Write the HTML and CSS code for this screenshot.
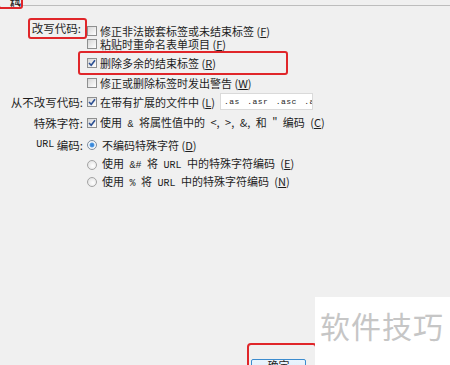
FILE: index.html
```html
<!DOCTYPE html>
<html lang="zh">
<head>
    <meta charset="UTF-8">
    <title>代码改写</title>
    <link rel="stylesheet" href="styles.css">
</head>
<body>
<div class="page">
    <div class="tabbar">
        <div class="tab">代码</div>
        <div class="tabline"></div>
    </div>

    <div class="form">
        <div class="lbl"><span class="mark">改写代码:</span></div>
        <div class="opt"><span class="cb"></span><span>修正非法嵌套标签或未结束标签 (<u>F</u>)</span></div>

        <div class="opt"><span class="cb"></span><span>粘贴时重命名表单项目 (<u>F</u>)</span></div>

        <div class="opt hl"><span class="cb">
            <svg width="8" height="8" viewBox="0 0 8 8"><path d="M1 4 L3.2 6.3 L7 1.3" fill="none" stroke="#2b4f93" stroke-width="1.6"/></svg>
        </span><span>删除多余的结束标签 (<u>R</u>)</span></div>

        <div class="opt"><span class="cb"></span><span>修正或删除标签时发出警告 (<u>W</u>)</span></div>

        <div class="lbl">从不改写代码:</div>
        <div class="opt"><span class="cb">
            <svg width="8" height="8" viewBox="0 0 8 8"><path d="M1 4 L3.2 6.3 L7 1.3" fill="none" stroke="#2b4f93" stroke-width="1.6"/></svg>
        </span><span class="ext-text">在带有扩展的文件中 (<u>L</u>)</span><span class="ext">.as .asr .asc .a</span></div>

        <div class="lbl">特殊字符:</div>
        <div class="opt"><span class="cb">
            <svg width="8" height="8" viewBox="0 0 8 8"><path d="M1 4 L3.2 6.3 L7 1.3" fill="none" stroke="#2b4f93" stroke-width="1.6"/></svg>
        </span><span class="wide">使用 <span class="mono">&amp;</span> 将属性值中的 &lt;, &gt;, &amp;, 和 " 编码 (<u>C</u>)</span></div>

        <div class="lbl"><span class="mono">URL</span>&nbsp;编码:</div>
        <div class="opt"><span class="rd on"></span><span>不编码特殊字符 (<u>D</u>)</span></div>

        <div class="opt"><span class="rd"></span><span class="wide">使用 <span class="mono">&amp;#</span> 将 <span class="mono">URL</span> 中的特殊字符编码 (<u>E</u>)</span></div>

        <div class="opt"><span class="rd"></span><span class="wide">使用 <span class="mono">%</span> 将 <span class="mono">URL</span> 中的特殊字符编码 (<u>N</u>)</span></div>
    </div>

    <div class="footer">
        <div class="okmark">
            <button class="btn">确定</button>
        </div>
    </div>

    <div class="watermark">软件技巧</div>
</div>
</body>
</html>
```

FILE: styles.css
```css
body {
    margin: 0;
    background-color: #f0f0f0;
    font-family: "Noto Sans CJK SC", "Liberation Sans", sans-serif;
    font-size: 11px;
    color: #1e1e1e;
}

.page {
    position: relative;
    width: 450px;
    height: 365px;
    overflow: hidden;
    display: flex;
    flex-direction: column;
}

.tabbar {
    display: flex;
    height: 6px;
}

.tab {
    width: 19px;
    height: 9px;
    margin-top: -4px;
    margin-left: -2px;
    padding-left: 2px;
    border: 2px solid #e0262a;
    border-radius: 3px;
    font-size: 11px;
    line-height: 4px;
    overflow: hidden;
    text-align: right;
    background-color: #f0f0f0;
}

.tabline {
    flex: 1;
    border-bottom: 1px solid #bdbdbd;
}

.form {
    display: grid;
    grid-template-columns: 83px 1fr;
    grid-template-rows: 13px 14px 24px 16px 21px 22px 22px 17px 18px;
    column-gap: 4px;
    margin-top: 18px;
    line-height: 12px;
}

.lbl {
    grid-column: 1;
    display: flex;
    align-items: center;
    justify-content: flex-end;
    white-space: nowrap;
    font-size: 11.5px;
}

.mark {
    display: flex;
    align-items: center;
    height: 17px;
    margin-top: -5px;
    margin-right: -4px;
    padding: 0 4px 0 2px;
    border: 2px solid #e0262a;
    border-radius: 3px;
}

.opt {
    grid-column: 2;
    display: flex;
    align-items: center;
    gap: 3px;
    white-space: nowrap;
}

.opt.hl {
    width: 199px;
    margin-left: -9px;
    padding-left: 7px;
    border: 2px solid #e0262a;
    border-radius: 3px;
}

.cb {
    width: 8px;
    height: 8px;
    border: 1px solid #8e8f8f;
    background: linear-gradient(135deg, #d6d6d6, #ffffff);
    display: flex;
    align-items: center;
    justify-content: center;
    flex-shrink: 0;
}

.rd {
    width: 8px;
    height: 8px;
    border: 1px solid #a3a3a3;
    border-radius: 50%;
    background: radial-gradient(circle at 60% 60%, #ffffff, #dcdcdc);
    flex-shrink: 0;
    margin-right: 2px;
}

.rd.on {
    border-color: #7f8c9c;
    background: radial-gradient(circle, #2f7bd0 0, #4d9ae6 2px, #eaf1f8 2.8px, #ffffff 5px);
}

.wide {
    word-spacing: 3px;
}

.mono {
    font-family: "Liberation Mono", monospace;
    font-size: 10px;
}

u {
    text-decoration: underline;
    text-underline-offset: 1px;
}

.ext-text {
    width: 117px;
}

.ext {
    width: 88px;
    height: 15px;
    padding-left: 3px;
    border: 1px solid #dadada;
    background-color: #ffffff;
    font-family: "Liberation Mono", monospace;
    font-size: 8px;
    line-height: 15px;
    letter-spacing: 0.5px;
    word-spacing: 2px;
    overflow: hidden;
}

.footer {
    margin-top: auto;
    height: 22px;
    padding-left: 247px;
}

.okmark {
    width: 64px;
    height: 30px;
    padding: 14px 0 0 2px;
    border: 2px solid #e0262a;
    border-radius: 4px;
}

.btn {
    display: block;
    width: 55px;
    height: 20px;
    padding: 0 0 8px 0;
    border: 1px solid #3c8ccf;
    border-radius: 2px;
    background: linear-gradient(#eaf5fd, #d9ecfb);
    font-family: "Noto Sans CJK SC", sans-serif;
    font-size: 11px;
    line-height: 11px;
    color: #1e1e1e;
}

.watermark {
    position: absolute;
    right: 0;
    bottom: 0;
    width: 130px;
    height: 56px;
    padding: 12px 0 0 5px;
    background-color: #ffffff;
    font-size: 30px;
    line-height: 32px;
    color: #c6c6c6;
    letter-spacing: 1px;
}
```
